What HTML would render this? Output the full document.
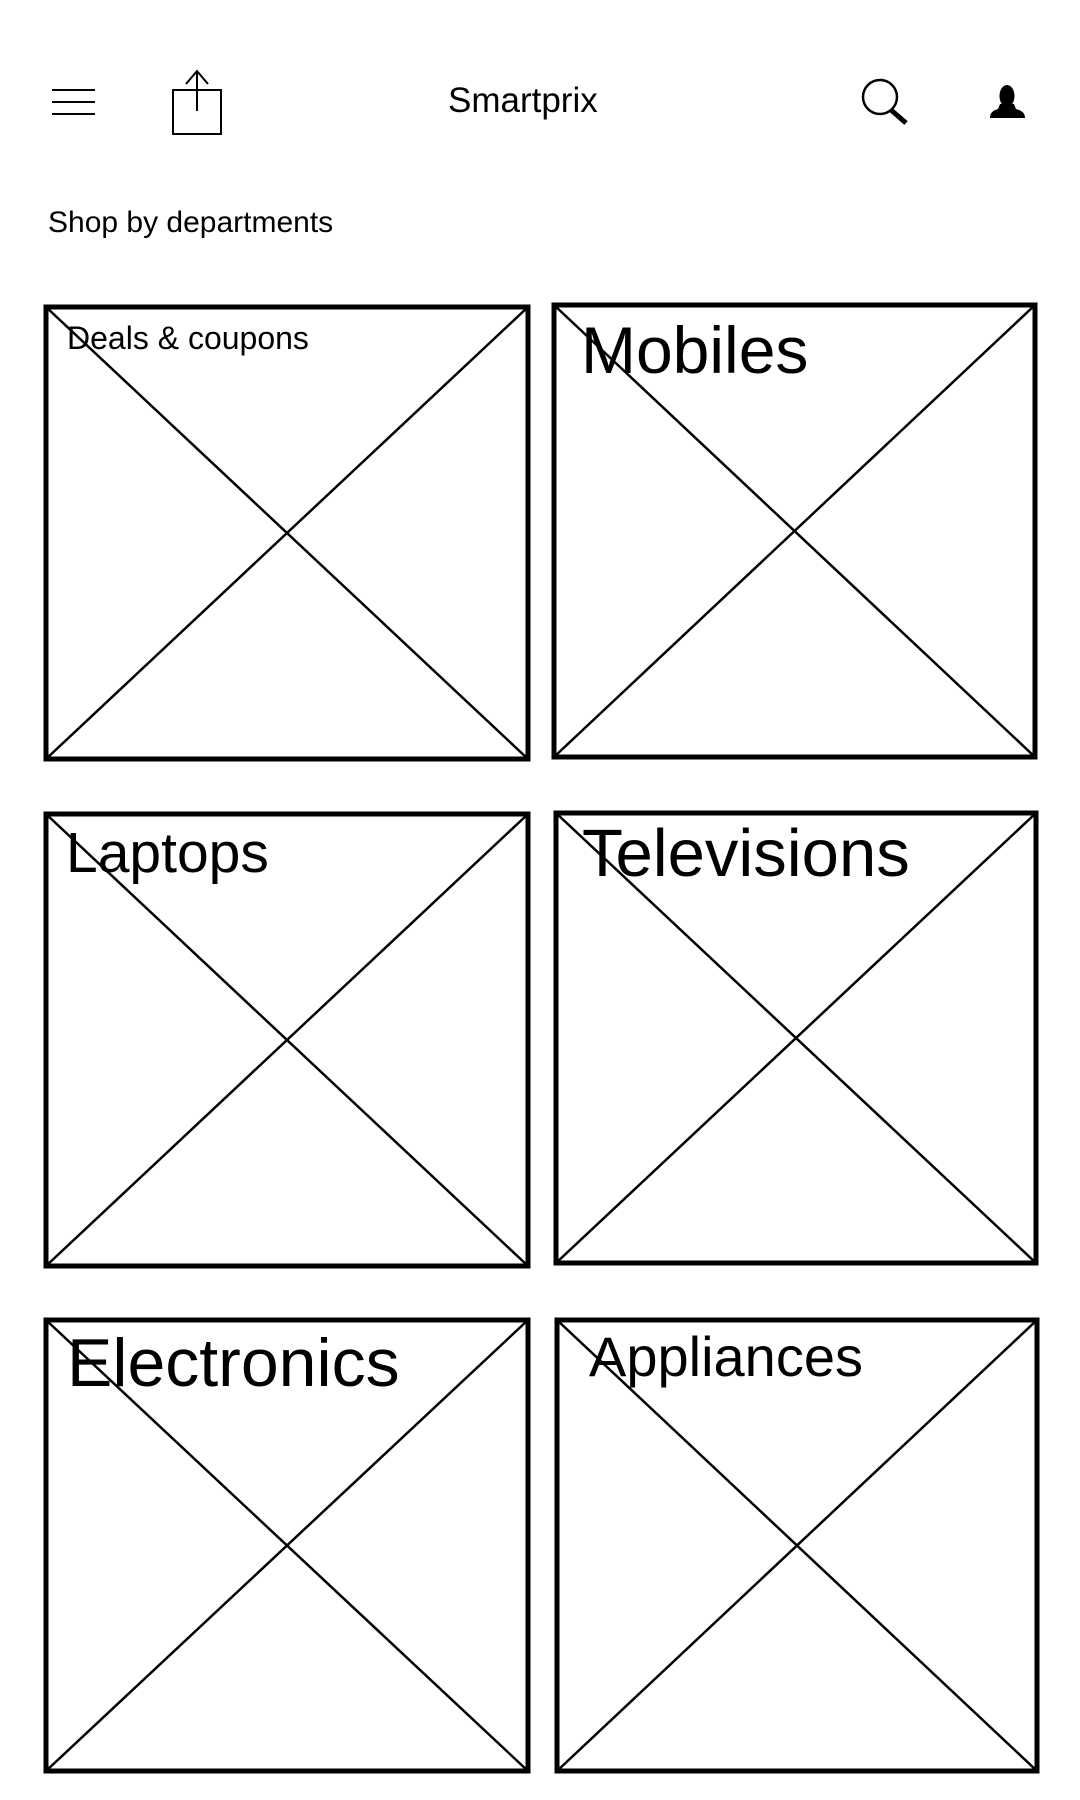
<!DOCTYPE html>
<html><head><meta charset="utf-8"><style>
html,body{margin:0;padding:0;background:#fff;width:1080px;height:1800px;overflow:hidden}
svg{display:block}
text{font-family:"Liberation Sans",Arial,sans-serif;fill:#000}
</style></head><body>
<svg width="1080" height="1800" viewBox="0 0 1080 1800" xmlns="http://www.w3.org/2000/svg">
<rect width="1080" height="1800" fill="#fff"/>
<g stroke="#000" stroke-width="2">
<line x1="52" y1="90" x2="95" y2="90"/>
<line x1="52" y1="102" x2="95" y2="102"/>
<line x1="52" y1="114" x2="95" y2="114"/>
</g>
<g stroke="#000" stroke-width="2" fill="none">
<rect x="173" y="90" width="48" height="44"/>
<line x1="197" y1="71" x2="197" y2="111"/>
<polyline points="186,84 197,71 208,84"/>
</g>
<text x="448" y="112" font-size="35">Smartprix</text>
<g stroke="#000" fill="none">
<ellipse cx="880" cy="97" rx="17" ry="17" stroke-width="2.5"/>
<line x1="891" y1="110" x2="906" y2="123" stroke-width="5"/>
</g>
<g fill="#000">
<ellipse cx="1007" cy="96" rx="7.5" ry="11"/>
<path d="M1000,104 L1014,104 L1016,109 Q1025,111 1025,118 L990,118 Q990,111 998,109 Z"/>
</g>
<text x="48" y="232" font-size="30">Shop by departments</text>
<g stroke="#000" fill="none">
<g stroke-width="5">
<rect x="46" y="307" width="482" height="452"/>
<rect x="554" y="305" width="481" height="452"/>
<rect x="46" y="814" width="482" height="452"/>
<rect x="556" y="813" width="480" height="450"/>
<rect x="46" y="1320" width="482" height="451"/>
<rect x="557" y="1320" width="480" height="451"/>
</g>
<g stroke-width="2.5">
<line x1="46" y1="307" x2="528" y2="759"/><line x1="528" y1="307" x2="46" y2="759"/>
<line x1="554" y1="305" x2="1035" y2="757"/><line x1="1035" y1="305" x2="554" y2="757"/>
<line x1="46" y1="814" x2="528" y2="1266"/><line x1="528" y1="814" x2="46" y2="1266"/>
<line x1="556" y1="813" x2="1036" y2="1263"/><line x1="1036" y1="813" x2="556" y2="1263"/>
<line x1="46" y1="1320" x2="528" y2="1771"/><line x1="528" y1="1320" x2="46" y2="1771"/>
<line x1="557" y1="1320" x2="1037" y2="1771"/><line x1="1037" y1="1320" x2="557" y2="1771"/>
</g>
</g>
<text x="67" y="349" font-size="32">Deals &amp; coupons</text>
<text x="581" y="373" font-size="66">Mobiles</text>
<text x="66" y="872" font-size="57">Laptops</text>
<text x="582" y="876" font-size="67">Televisions</text>
<text x="67" y="1386" font-size="68">Electronics</text>
<text x="589" y="1376" font-size="56">Appliances</text>
</svg>
</body></html>
